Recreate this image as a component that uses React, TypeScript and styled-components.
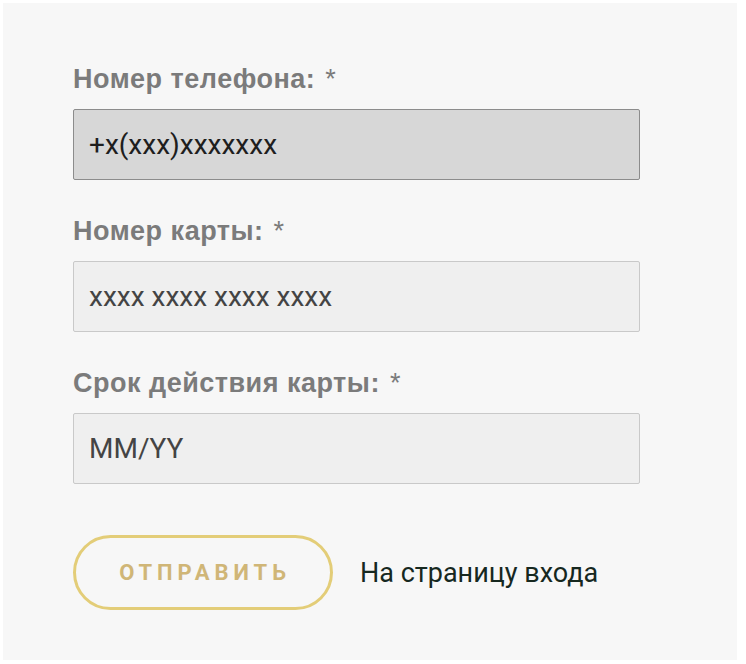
import styled, { createGlobalStyle } from "styled-components";

const GlobalStyle = createGlobalStyle`
  html, body {
    margin: 0;
    padding: 0;
    background: #ffffff;
  }
`;

const Panel = styled.div`
  box-sizing: border-box;
  width: 734px;
  height: 657px;
  margin: 3px 0 0 3px;
  padding: 60px 0 0 70px;
  background: #f7f7f7;
`;

const Form = styled.form`
  display: flex;
  flex-direction: column;
  width: 567px;
`;

const Field = styled.div`
  display: flex;
  flex-direction: column;
  gap: 13px;
  margin-bottom: 35px;
`;

const Label = styled.label`
  font-family: "Liberation Sans", Arial, sans-serif;
  font-size: 27px;
  font-weight: 700;
  line-height: 33px;
  color: #7b7b7b;
  letter-spacing: 0.5px;
`;

const Star = styled.span`
  font-weight: 400;
  margin-left: 10px;
`;

const Input = styled.input<{ $filled?: boolean }>`
  box-sizing: border-box;
  width: 567px;
  height: 71px;
  padding: 0 15px;
  border: 1px solid ${(p) => (p.$filled ? "#8c8c8c" : "#c9c9c9")};
  border-radius: 2px;
  background: ${(p) => (p.$filled ? "#d7d7d7" : "#efefef")};
  font-family: Roboto, "Liberation Sans", sans-serif;
  font-size: 28px;
  color: #1e1e1e;
  outline: none;

  &::placeholder {
    color: #444;
    opacity: 1;
  }
`;

const Actions = styled.div`
  display: flex;
  align-items: center;
  gap: 27px;
  margin-top: 16px;
`;

const SubmitButton = styled.button`
  box-sizing: border-box;
  width: 260px;
  height: 75px;
  padding: 0 0 0 4px;
  border: 3px solid #e3cd78;
  border-radius: 38px;
  background: transparent;
  font-family: Roboto, "Liberation Sans", sans-serif;
  font-size: 22px;
  font-weight: 700;
  letter-spacing: 4.9px;
  color: #d0b677;
  cursor: pointer;
`;

const LoginLink = styled.a`
  font-family: Roboto, "Liberation Sans", sans-serif;
  font-size: 27px;
  color: #16281f;
  text-decoration: none;
`;

export default function App() {
  return (
    <>
      <GlobalStyle />
      <Panel>
        <Form onSubmit={(e) => e.preventDefault()}>
          <Field>
            <Label>
              Номер телефона:<Star>*</Star>
            </Label>
            <Input $filled defaultValue="+x(xxx)xxxxxxx" />
          </Field>
          <Field>
            <Label>
              Номер карты:<Star>*</Star>
            </Label>
            <Input placeholder="xxxx xxxx xxxx xxxx" />
          </Field>
          <Field>
            <Label>
              Срок действия карты:<Star>*</Star>
            </Label>
            <Input placeholder="MM/YY" />
          </Field>
          <Actions>
            <SubmitButton type="submit">ОТПРАВИТЬ</SubmitButton>
            <LoginLink href="#">На страницу входа</LoginLink>
          </Actions>
        </Form>
      </Panel>
    </>
  );
}
